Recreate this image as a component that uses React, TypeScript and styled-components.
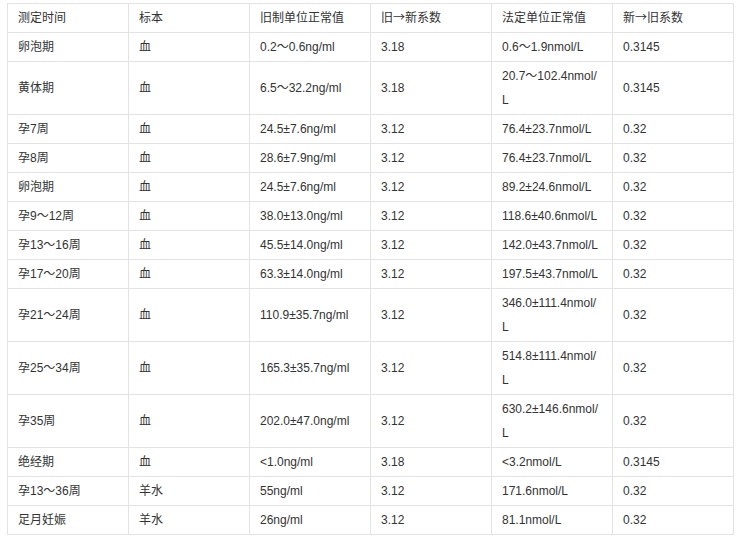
import styled, { createGlobalStyle } from "styled-components";

const GlobalStyle = createGlobalStyle`
  body {
    margin: 0;
    background: #fff;
  }
`;

const Page = styled.div`
  padding: 3px 0 0 7px;
`;

const Table = styled.table`
  width: 727px;
  table-layout: fixed;
  border-collapse: collapse;
  font-family: "Liberation Sans", Arial, "Noto Sans CJK SC", sans-serif;
  font-size: 12px;
  color: #333;
`;

const Cell = styled.td`
  border: 1px solid #e3e3e3;
  padding: 2px 10px;
  height: 24px;
  line-height: 24px;
  vertical-align: middle;
  text-align: left;
  font-weight: normal;
  white-space: pre;
`;

const HeadCell = styled(Cell).attrs({ as: "th" })``;

const Arrow = styled.span`
  font-family: "Noto Sans CJK SC", sans-serif;
  line-height: 12px;
`;

const headers = ["测定时间", "标本", "旧制单位正常值", "旧→新系数", "法定单位正常值", "新→旧系数"];

// "\n" marks where the narrow column wraps in the original
const rows: string[][] = [
  ["卵泡期", "血", "0.2～0.6ng/ml", "3.18", "0.6～1.9nmol/L", "0.3145"],
  ["黄体期", "血", "6.5～32.2ng/ml", "3.18", "20.7～102.4nmol/\nL", "0.3145"],
  ["孕7周", "血", "24.5±7.6ng/ml", "3.12", "76.4±23.7nmol/L", "0.32"],
  ["孕8周", "血", "28.6±7.9ng/ml", "3.12", "76.4±23.7nmol/L", "0.32"],
  ["卵泡期", "血", "24.5±7.6ng/ml", "3.12", "89.2±24.6nmol/L", "0.32"],
  ["孕9～12周", "血", "38.0±13.0ng/ml", "3.12", "118.6±40.6nmol/L", "0.32"],
  ["孕13～16周", "血", "45.5±14.0ng/ml", "3.12", "142.0±43.7nmol/L", "0.32"],
  ["孕17～20周", "血", "63.3±14.0ng/ml", "3.12", "197.5±43.7nmol/L", "0.32"],
  ["孕21～24周", "血", "110.9±35.7ng/ml", "3.12", "346.0±111.4nmol/\nL", "0.32"],
  ["孕25～34周", "血", "165.3±35.7ng/ml", "3.12", "514.8±111.4nmol/\nL", "0.32"],
  ["孕35周", "血", "202.0±47.0ng/ml", "3.12", "630.2±146.6nmol/\nL", "0.32"],
  ["绝经期", "血", "<1.0ng/ml", "3.18", "<3.2nmol/L", "0.3145"],
  ["孕13～36周", "羊水", "55ng/ml", "3.12", "171.6nmol/L", "0.32"],
  ["足月妊娠", "羊水", "26ng/ml", "3.12", "81.1nmol/L", "0.32"],
];

const renderHeader = (h: string) => {
  const parts = h.split("→");
  if (parts.length < 2) return h;
  return (
    <>
      {parts[0]}
      <Arrow>→</Arrow>
      {parts[1]}
    </>
  );
};

export default function App() {
  return (
    <>
      <GlobalStyle />
      <Page>
        <Table>
          <thead>
            <tr>
              {headers.map((h) => (
                <HeadCell key={h}>{renderHeader(h)}</HeadCell>
              ))}
            </tr>
          </thead>
          <tbody>
            {rows.map((r, i) => (
              <tr key={i}>
                {r.map((c, j) => (
                  <Cell key={j}>{c}</Cell>
                ))}
              </tr>
            ))}
          </tbody>
        </Table>
      </Page>
    </>
  );
}
